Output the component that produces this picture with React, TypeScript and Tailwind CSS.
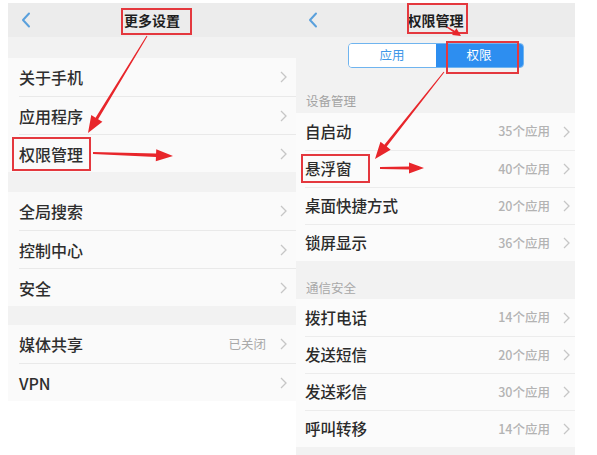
import React from "react";

const FONT = { fontFamily: '"Noto Sans CJK SC", "Noto Sans", sans-serif' };

function Chevron({ className = "" }: { className?: string }) {
  return (
    <svg width="7" height="12" viewBox="0 0 7 12" className={className}>
      <polyline points="1,1 6,6 1,11" fill="none" stroke="#c6c6c6" strokeWidth="1.3" />
    </svg>
  );
}

function Back() {
  return (
    <svg width="10" height="16" viewBox="0 0 10 16">
      <polyline points="8,1.5 2,8 8,14.5" fill="none" stroke="#5aa0dc" strokeWidth="2" strokeLinecap="round" strokeLinejoin="round" />
    </svg>
  );
}

function LeftRow({ label, value, first }: { label: string; value?: string; first?: boolean }) {
  return (
    <div className="h-[38px] pl-[11px] bg-[#fafafa]">
      <div className={`flex h-full items-center pr-[9px] ${first ? "" : "border-t border-[#e9e9e9]"}`}>
        <span className="flex-1 text-[16px] font-medium text-[#2e2e2e]">{label}</span>
        {value && <span className="mr-[14px] text-[12.5px] text-[#a9a9a9]">{value}</span>}
        <Chevron />
      </div>
    </div>
  );
}

function RightRow({ label, value, first }: { label: string; value: string; first?: boolean }) {
  return (
    <div className="h-[37px] pl-[9px] bg-[#fbfbfb]">
      <div className={`flex h-full items-center pr-[5px] ${first ? "" : "border-t border-[#ececec]"}`}>
        <span className="flex-1 text-[15.5px] font-medium text-[#2b2b2b]">{label}</span>
        <span className="mr-[13px] text-[12.5px] font-medium text-[#b3b3b3]">{value}</span>
        <Chevron />
      </div>
    </div>
  );
}

function arrowPts(x1: number, y1: number, x2: number, y2: number, head: number, hw: number, w0: number, w1: number) {
  const dx = x2 - x1;
  const dy = y2 - y1;
  const len = Math.hypot(dx, dy);
  const ux = dx / len;
  const uy = dy / len;
  const nx = -uy;
  const ny = ux;
  const bx = x2 - ux * head;
  const by = y2 - uy * head;
  const p = [
    [x1 + (nx * w0) / 2, y1 + (ny * w0) / 2],
    [bx + (nx * w1) / 2, by + (ny * w1) / 2],
    [bx + nx * hw, by + ny * hw],
    [x2, y2],
    [bx - nx * hw, by - ny * hw],
    [bx - (nx * w1) / 2, by - (ny * w1) / 2],
    [x1 - (nx * w0) / 2, y1 - (ny * w0) / 2],
  ];
  return p.map((q) => q.join(",")).join(" ");
}

function Box({ x, y, w, h }: { x: number; y: number; w: number; h: number }) {
  return (
    <div
      className="absolute border-2 border-[#e4383e]"
      style={{ left: x, top: y, width: w, height: h }}
    />
  );
}

export default function App() {
  return (
    <div className="relative h-[455px] w-[597px] overflow-hidden bg-white" style={FONT}>
      <div className="flex pl-[8px] pt-[3px]">
        {/* Left phone */}
        <div className="flex w-[288px] flex-col">
          <div className="relative flex h-[34px] items-center justify-center bg-[#ececec]">
            <div className="absolute left-[13px] top-[9px]">
              <Back />
            </div>
            <span className="text-[14px] font-bold text-[#1e1e1e]">更多设置</span>
          </div>
          <div className="h-[21px] bg-[#f2f2f2]" />
          <LeftRow label="关于手机" first />
          <LeftRow label="应用程序" />
          <LeftRow label="权限管理" />
          <div className="h-[20px] bg-[#f2f2f2]" />
          <LeftRow label="全局搜索" first />
          <LeftRow label="控制中心" />
          <LeftRow label="安全" />
          <div className="h-[19px] bg-[#f2f2f2]" />
          <LeftRow label="媒体共享" value="已关闭" first />
          <LeftRow label="VPN" />
        </div>

        {/* Right phone */}
        <div className="flex h-[452px] w-[279px] flex-col bg-[#f2f2f2]">
          <div className="relative flex h-[34px] items-center justify-center bg-[#ececec]">
            <div className="absolute left-[12px] top-[9px]">
              <Back />
            </div>
            <span className="text-[14px] font-bold text-[#1e1e1e]">权限管理</span>
          </div>
          <div className="flex justify-center pt-[6px]">
            <div className="flex h-[25px] w-[176px] overflow-hidden rounded-[4px] border border-[#6fb4ef]">
              <div className="flex flex-1 items-center justify-center bg-white text-[12.5px] text-[#3e97e8]">应用</div>
              <div className="flex flex-1 items-center justify-center bg-[#2d8ef0] text-[12.5px] text-white">权限</div>
            </div>
          </div>
          <div className="flex h-[45px] items-end pb-[2px] pl-[10px] text-[12.5px] text-[#a3a3a3]">设备管理</div>
          <RightRow label="自启动" value="35个应用" first />
          <RightRow label="悬浮窗" value="40个应用" />
          <RightRow label="桌面快捷方式" value="20个应用" />
          <RightRow label="锁屏显示" value="36个应用" />
          <div className="flex h-[38px] items-end pb-[1px] pl-[10px] text-[12.5px] text-[#a8a8a8]">通信安全</div>
          <RightRow label="拨打电话" value="14个应用" first />
          <RightRow label="发送短信" value="20个应用" />
          <RightRow label="发送彩信" value="30个应用" />
          <RightRow label="呼叫转移" value="14个应用" />
        </div>
      </div>

      {/* Annotations */}
      <Box x={121} y={8} w={71} h={27} />
      <Box x={12} y={137} w={79} h={34} />
      <Box x={407} y={3} w={61} h={31} />
      <Box x={446} y={41} w={73} h={33} />
      <Box x={301} y={154} w={69} h={29} />
      <svg className="pointer-events-none absolute left-0 top-0" width="597" height="455">
        <g fill="#e8262b">
          <polygon points={arrowPts(147, 36, 88, 133, 17, 6.5, 1, 3)} />
          <polygon points={arrowPts(93, 153, 173, 156, 17, 6, 2, 3.5)} />
          <polygon points={arrowPts(447, 27, 461, 36, 8, 4, 1, 2)} />
          <polygon points={arrowPts(444, 72, 375, 159, 17, 6.5, 1, 3)} />
          <polygon points={arrowPts(380, 168, 424, 168, 15, 5.5, 2, 3)} />
        </g>
      </svg>
    </div>
  );
}
